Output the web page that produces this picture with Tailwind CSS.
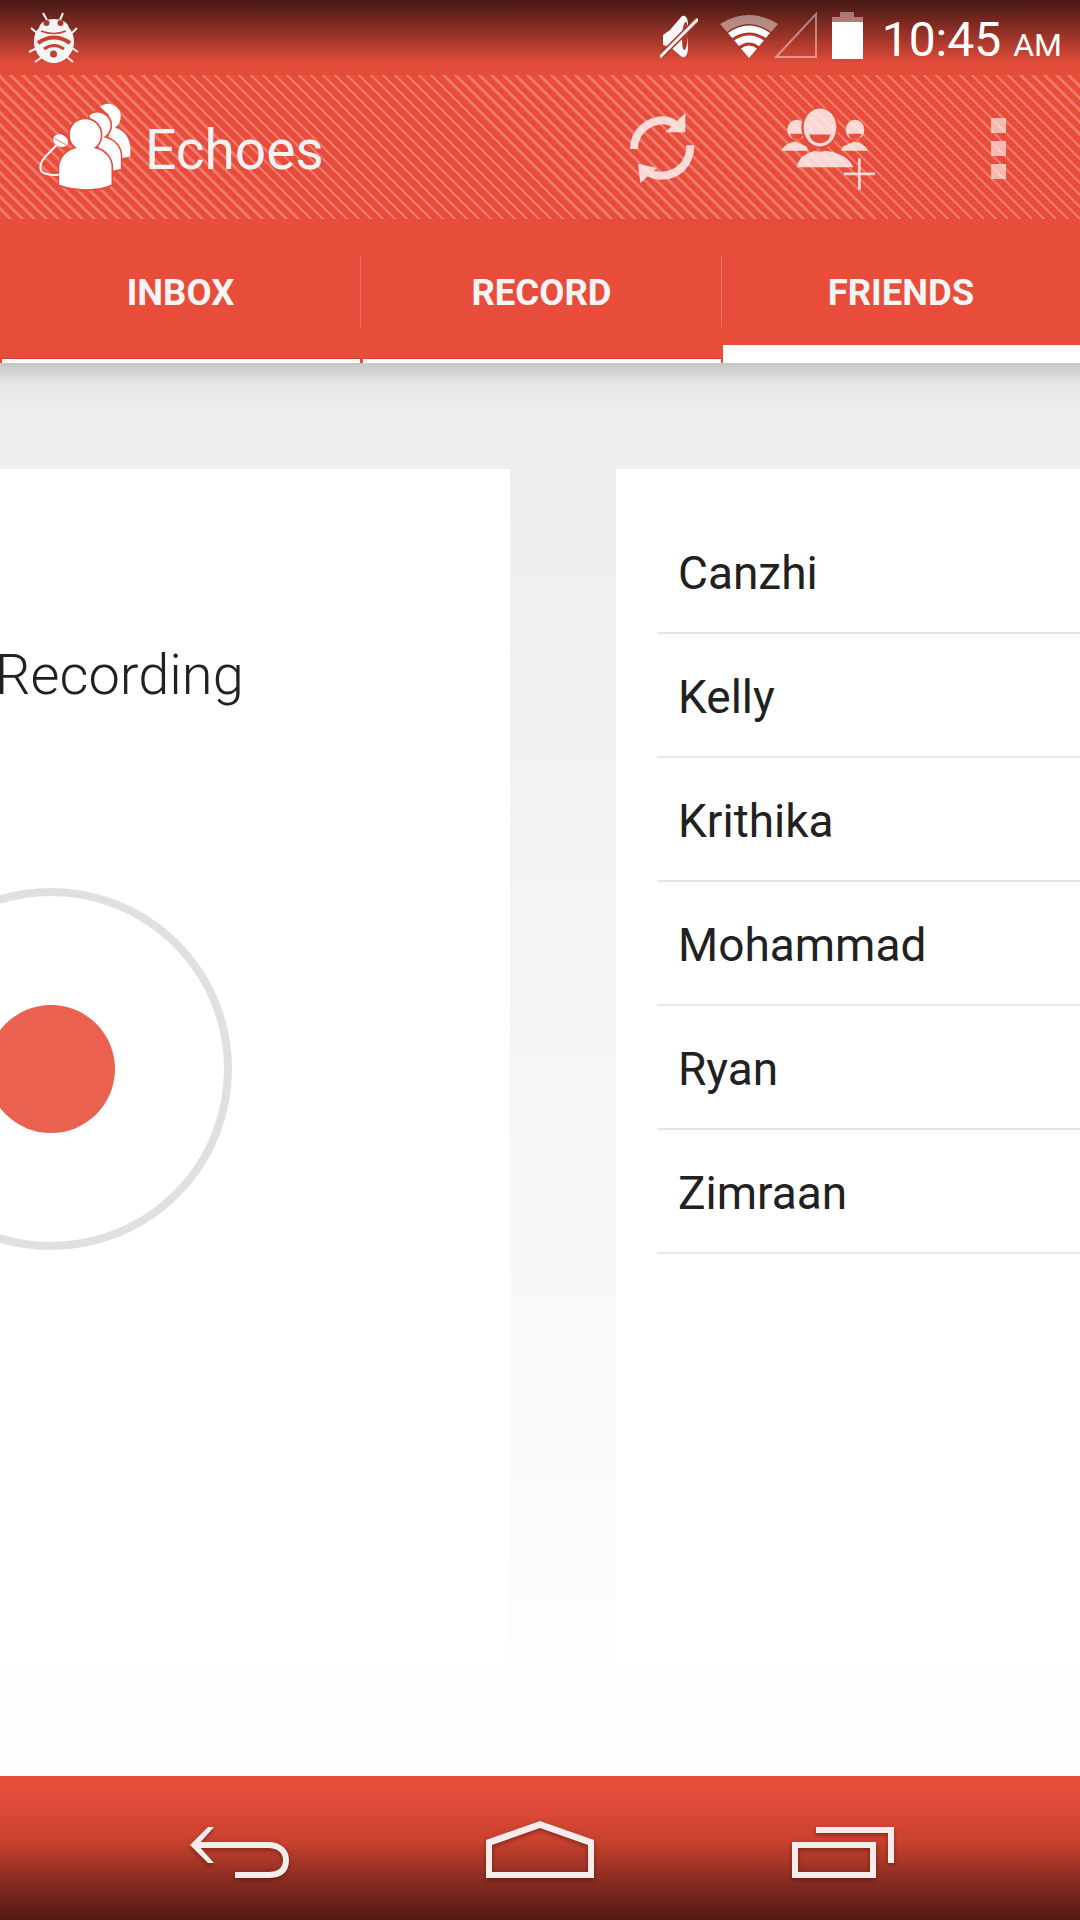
<!DOCTYPE html>
<html lang="en">
<head>
    <meta charset="UTF-8">
    <meta name="viewport" content="width=device-width, initial-scale=1.0">
    <title>Echoes</title>
    <script src="https://cdn.jsdelivr.net/npm/@tailwindcss/browser@4"></script>
</head>
<body class="font-['Roboto',sans-serif] bg-white">
    <div class="w-[1080px] h-[1920px] flex flex-col overflow-hidden">
        <!-- Status bar -->
        <div class="h-[75px] shrink-0 flex items-start justify-between bg-linear-to-b from-[#4e1a15] from-[5%] to-[#e44c3a] to-[85%] text-white">
            <svg class="w-[56px] h-[52px] ml-[26px] mt-[12px]" viewBox="0 0 56 52">
                <path fill="none" stroke="#f5f5f5" stroke-width="2" d="M17 1l4 7M37 1l-3 7M5 16l6 5M51 16l-5 5M3 40l8-4M52 40l-6-4M9 50l7-5M47 50l-6-5"/>
                <path fill="#f5f5f5" d="M28 7C21 7 14 10 13 16 9 20 8 25 8 30 8 41 17 51 28 51 39 51 48 41 48 30 48 25 47 20 43 16 42 10 35 7 28 7z"/>
                <circle cx="20.5" cy="11" r="3" fill="#a83a2d"/><circle cx="34.5" cy="11" r="3" fill="#a83a2d"/>
                <path fill="none" stroke="#c8402f" stroke-width="1.5" d="M15 19q13 5 25 0"/>
                <path fill="none" stroke="#c8402f" stroke-width="4" d="M12 31q16-11 32 0"/>
                <path fill="none" stroke="#c8402f" stroke-width="3" d="M18 37q10-7 20 0"/>
                <circle cx="27.5" cy="42" r="3.5" fill="#c8402f"/>
            </svg>
            <div class="flex items-start">
                <svg class="w-[38px] h-[43px] mt-[15px]" viewBox="0 0 38 43">
                    <path fill="#f8f8f8" d="M3 20l7-5L22 1q5-2 6 7v26q-1 10-6 8L10 32l-7-2z"/>
                    <ellipse cx="25" cy="21" rx="3" ry="14" fill="#b03a2c" transform="rotate(3 25 21)"/>
                    <path stroke="#a83a2d" stroke-width="6" d="M1 41L37 5"/>
                    <path stroke="#f8f8f8" stroke-width="3" d="M0 42L38 4"/>
                </svg>
                <svg class="w-[58px] h-[43px] ml-[22px] mt-[15px]" viewBox="0 0 58 43">
                    <path fill="#fff" fill-opacity=".45" d="M0 9Q29-9 58 9l-7 8Q29 1 7 17z"/>
                    <path fill="#fff" d="M8 18Q29 3 50 18L29 43z"/>
                    <path fill="none" stroke="#b03a2c" stroke-width="3" d="M12 25Q29 13 46 25M19 33Q29 25 39 33"/>
                </svg>
                <svg class="w-[43px] h-[46px] -ml-[4px] mt-[12px]" viewBox="0 0 43 46">
                    <path fill="none" stroke="#fff" stroke-opacity=".42" stroke-width="2" d="M2 45L42 2v43z"/>
                </svg>
                <svg class="w-[31px] h-[47px] ml-[15px] mt-[12px]" viewBox="0 0 31 47">
                    <path fill="#fff" fill-opacity=".4" d="M8 0h14v5h9v5H0V5h8z"/>
                    <rect y="10" width="31" height="37" fill="#fff"/>
                </svg>
                <div class="ml-[19px] mr-[18px] mt-[10px] flex items-baseline leading-[60px] whitespace-nowrap font-normal">
                    <span class="text-[48px]">10:45</span><span class="text-[32px] ml-[12px]">AM</span>
                </div>
            </div>
        </div>

        <!-- Action bar -->
        <div class="h-[144px] shrink-0 flex items-center bg-[#e84d3c] bg-[repeating-linear-gradient(45deg,#e84d3c_0,#e84d3c_6px,#ef7a6b_6px,#ef7a6b_8.5px)]">
            <svg class="w-[130px] h-[110px] ml-[20px] -mt-[4px]" viewBox="0 0 390 330">
                <g fill="#fff" stroke="#e84d3c" stroke-width="5">
                    <path stroke="none" d="M240 50a38 38 0 0 1 62 30c0 14-6 25-17 33 30 8 46 34 46 62v24l-24 6-40-40 0-90z"/>
                    <path d="M205 75a42 42 0 0 1 69 30c0 15-6 27-18 36 32 8 49 32 49 60v38l-26 6-50-80z"/>
                    <path d="M195 85c28 0 50 22 50 50 0 16-7 29-18 38 29 7 50 30 50 58v54c-20 10-50 15-80 15-30 0-55-5-82-14v-50c0-32 22-56 50-63-11-9-18-22-18-38 0-28 20-50 48-50z"/>
                </g>
                <ellipse cx="122" cy="152" rx="23" ry="18" fill="#fff" transform="rotate(25 122 152)"/>
                <path stroke="#e84d3c" stroke-width="2.5" d="M104 146l34 18"/>
                <path fill="none" stroke="#fff" stroke-width="6" d="M110 165L76 200C62 216 58 232 64 243 72 254 92 256 116 254"/>
            </svg>
            <span class="-ml-[5px] mt-[6px] text-[55px] text-[#f3f3f3] font-normal leading-none">Echoes</span>
            <svg class="w-[66px] h-[70px] ml-[305px] mt-[2px]" viewBox="22 40 196 210">
                <g opacity=".78" fill="#fff">
                    <path fill="none" stroke="#fff" stroke-width="24" d="M36 148C36 95 80 62 125 62 140 62 150 68 160 75M205 137C205 195 165 228 115 228 100 228 90 225 80 218"/>
                    <path d="M190 40v58h-60zM55 250l-7-58 57 13z"/>
                </g>
            </svg>
            <svg class="w-[94px] h-[82px] ml-[86px] mt-[4px]" viewBox="483 20 282 245">
                <g opacity=".78" fill="#fff">
                    <ellipse cx="530" cy="85" rx="28" ry="30"/>
                    <ellipse cx="705" cy="85" rx="28" ry="30"/>
                    <path fill="#e84d3c" d="M510 97h40q-4 18-20 18t-20-18zM685 97h40q-4 18-20 18t-20-18z"/>
                    <path d="M483 148q12-23 42-28l35 15 5 13zM745 148q-12-23-42-28l-35 15-5 13z"/>
                    <ellipse cx="600" cy="78" rx="56" ry="64" fill="#e84d3c"/>
                    <ellipse cx="600" cy="78" rx="49" ry="57"/>
                    <path fill="#e84d3c" d="M568 99h64q-6 26-32 26t-32-26z"/>
                    <path d="M530 197q10-42 60-49l10 4 15-4q65 7 85 49z"/>
                    <path d="M714 170h8v43h43v8h-43v44h-8v-44h-42v-8h42z"/>
                </g>
            </svg>
            <div class="ml-[116px] mt-[2px] w-[15px] flex flex-col gap-[8px]">
                <div class="h-[15px] bg-white/60"></div>
                <div class="h-[15px] bg-white/60"></div>
                <div class="h-[15px] bg-white/60"></div>
            </div>
        </div>

        <!-- Tabs -->
        <div class="h-[144px] shrink-0 flex bg-[#e84d3c] text-[#f5f5f5] font-bold text-[36.5px]">
            <div class="relative w-[361px] flex items-start justify-center pt-[54px] leading-[40px]">INBOX
                <div class="absolute left-[2px] right-[1px] bottom-0 h-[5px] bg-white border-t border-[#d63d2e]"></div>
                <div class="absolute right-0 top-[36px] h-[72px] w-[1px] bg-white/20"></div>
            </div>
            <div class="relative w-[361px] flex items-start justify-center pt-[54px] leading-[40px]">RECORD
                <div class="absolute left-[2px] right-[1px] bottom-0 h-[5px] bg-white border-t border-[#d63d2e]"></div>
                <div class="absolute right-0 top-[36px] h-[72px] w-[1px] bg-white/20"></div>
            </div>
            <div class="relative flex-1 flex items-start justify-center pt-[54px] leading-[40px]">FRIENDS
                <div class="absolute left-[1px] right-0 bottom-0 h-[18px] bg-white"></div>
            </div>
        </div>

        <!-- Pages -->
        <div class="flex-1 flex flex-col bg-[#fdfdfd]">
            <div class="h-[106px] shrink-0 bg-linear-to-b from-[#c6c6c6] via-[#e6e6e6] via-[20%] to-[#eeeeee] to-[45%]"></div>
            <div class="h-[1201px] shrink-0 flex bg-linear-to-b from-[#eeeeee] to-[#fdfdfd]">
                <div class="w-[510px] overflow-hidden bg-white flex flex-col">
                    <p class="mt-[173px] -ml-[5px] text-[56px] font-light text-[#212121] leading-[66px] whitespace-nowrap">Recording</p>
                    <div class="mt-[180px] -ml-[130px] w-[362px] h-[362px] shrink-0 rounded-full border-[8px] border-[#e0e0e0] flex items-center justify-center">
                        <div class="w-[128px] h-[128px] rounded-full bg-[#eb6150]"></div>
                    </div>
                </div>
                <div class="ml-[106px] flex-1 bg-white pt-[41px] pl-[41px]">
                    <div class="h-[124px] border-b-2 border-[#e6e6e6] pl-[21px] pt-[4px] flex items-center text-[46px] text-[#212121]">Canzhi</div>
                    <div class="h-[124px] border-b-2 border-[#e6e6e6] pl-[21px] pt-[4px] flex items-center text-[46px] text-[#212121]">Kelly</div>
                    <div class="h-[124px] border-b-2 border-[#e6e6e6] pl-[21px] pt-[4px] flex items-center text-[46px] text-[#212121]">Krithika</div>
                    <div class="h-[124px] border-b-2 border-[#e6e6e6] pl-[21px] pt-[4px] flex items-center text-[46px] text-[#212121]">Mohammad</div>
                    <div class="h-[124px] border-b-2 border-[#e6e6e6] pl-[21px] pt-[4px] flex items-center text-[46px] text-[#212121]">Ryan</div>
                    <div class="h-[124px] border-b-2 border-[#e6e6e6] pl-[21px] pt-[4px] flex items-center text-[46px] text-[#212121]">Zimraan</div>
                </div>
            </div>
        </div>

        <!-- Nav bar -->
        <div class="h-[144px] shrink-0 flex items-start bg-linear-to-b from-[#e64d3b] from-[10%] via-[#c9422f] via-[45%] to-[#541a14] to-[98%]">
            <svg class="w-[100px] h-[52px] ml-[190px] mt-[51px] drop-shadow-[0_2px_2px_rgba(60,10,5,0.5)]" viewBox="0 0 100 52">
                <path fill="#f6eceb" d="M18 0h6L8 18l16 18h-6L0 18z"/>
                <path fill="none" stroke="#f6eceb" stroke-width="6" d="M5 18H78C90 18 96 25 96 33 96 43 90 48 78 48H45"/>
            </svg>
            <svg class="w-[108px] h-[57px] ml-[196px] mt-[45px] drop-shadow-[0_2px_2px_rgba(60,10,5,0.5)]" viewBox="0 0 108 57">
                <path fill="#f6eceb" fill-rule="evenodd" d="M54 0L108 19V57H0V19zM54 7L6 24V51H102V24z"/>
            </svg>
            <svg class="w-[102px] h-[51px] ml-[198px] mt-[51px] drop-shadow-[0_2px_2px_rgba(60,10,5,0.5)]" viewBox="0 0 102 51" fill="none" stroke="#f6eceb" stroke-width="6">
                <path d="M3 18H81V48H3z"/>
                <path d="M24 3H99V36"/>
            </svg>
        </div>
    </div>
</body>
</html>
